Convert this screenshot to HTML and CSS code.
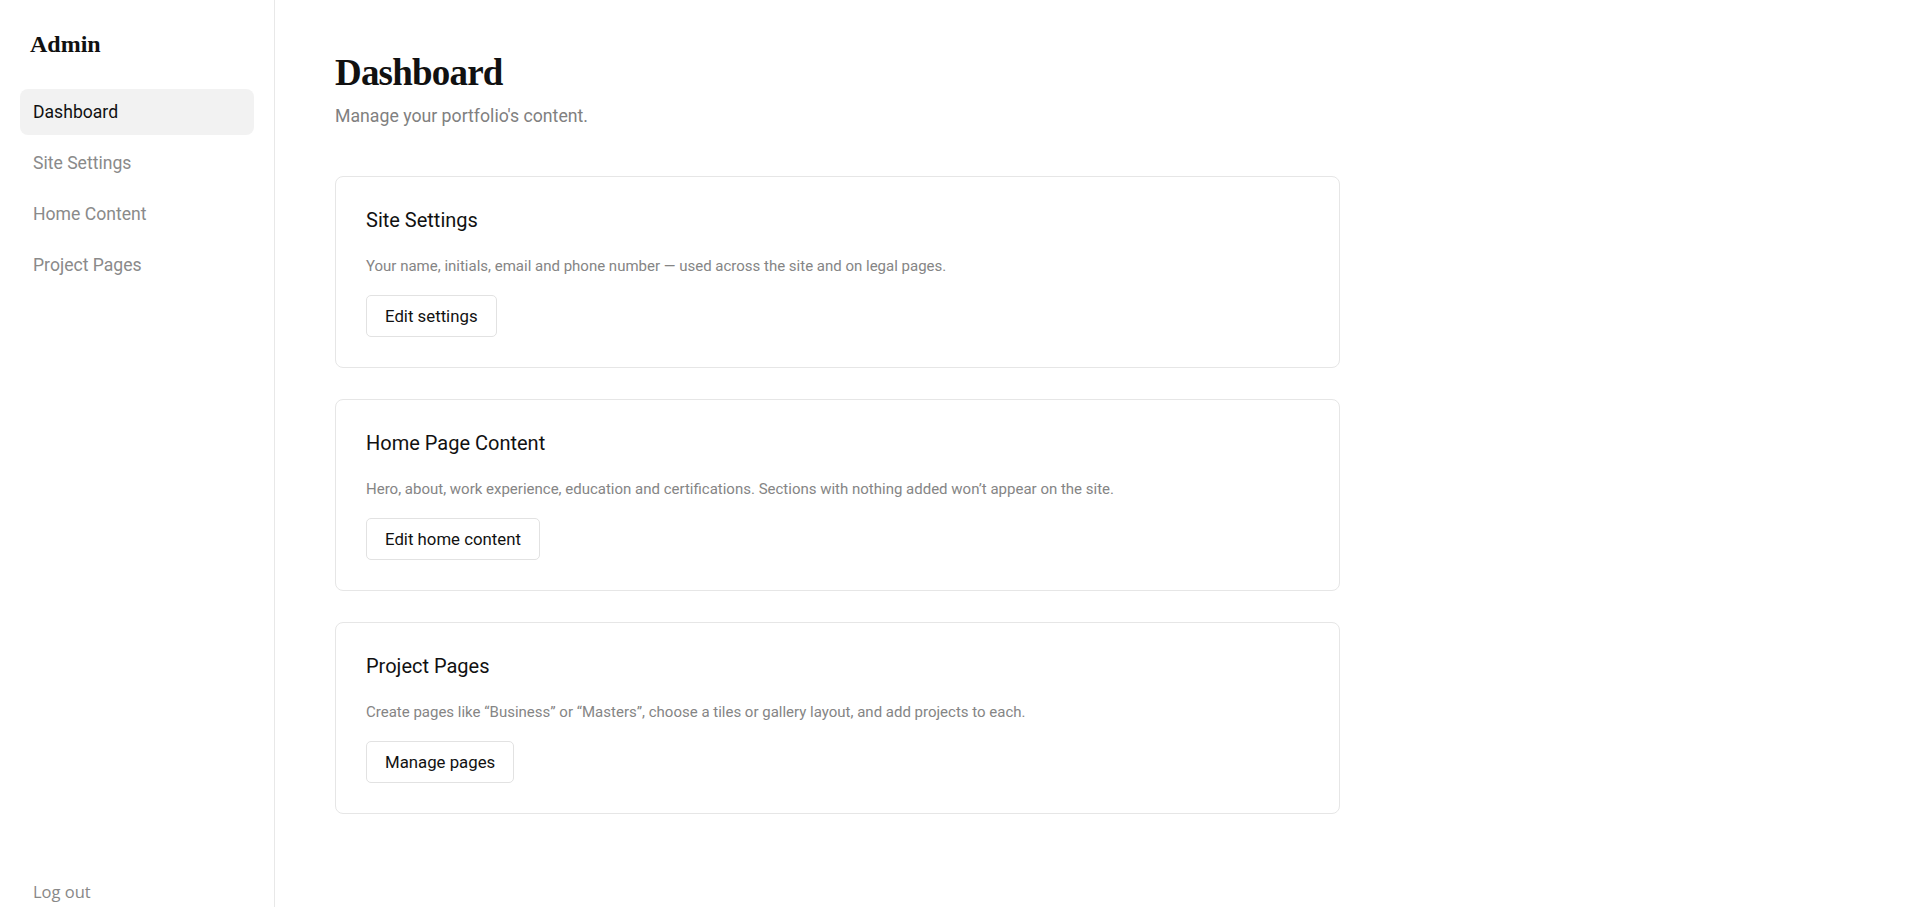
FILE: index.html
```html
<!DOCTYPE html>
<html lang="en">
<head>
<meta charset="utf-8">
<title>Admin — Dashboard</title>
<link rel="stylesheet" href="styles.css">
</head>
<body>
<div class="layout">
  <aside class="sidebar">
    <div class="brand">Admin</div>
    <nav class="nav">
      <a class="nav-item active" href="#">Dashboard</a>
      <a class="nav-item" href="#">Site Settings</a>
      <a class="nav-item" href="#">Home Content</a>
      <a class="nav-item" href="#">Project Pages</a>
    </nav>
    <button class="logout" type="button">Log out</button>
  </aside>
  <main class="main">
    <div class="content">
      <h1 class="title">Dashboard</h1>
      <p class="subtitle">Manage your portfolio's content.</p>
      <section class="card">
        <h2 class="card-title">Site Settings</h2>
        <p class="card-desc">Your name, initials, email and phone number — used across the site and on legal pages.</p>
        <a class="btn" href="#">Edit settings</a>
      </section>
      <section class="card">
        <h2 class="card-title">Home Page Content</h2>
        <p class="card-desc">Hero, about, work experience, education and certifications. Sections with nothing added won’t appear on the site.</p>
        <a class="btn" href="#">Edit home content</a>
      </section>
      <section class="card">
        <h2 class="card-title">Project Pages</h2>
        <p class="card-desc">Create pages like “Business” or “Masters”, choose a tiles or gallery layout, and add projects to each.</p>
        <a class="btn" href="#">Manage pages</a>
      </section>
    </div>
  </main>
</div>
</body>
</html>
```
FILE: styles.css
```css
html {
  background: #ffffff;
}
body {
  margin: 0;
  background: #ffffff;
  color: #111111;
  font-family: "Roboto", "Liberation Sans", sans-serif;
}
.layout {
  display: flex;
  align-items: flex-start;
}
.sidebar {
  position: sticky;
  top: 0;
  box-sizing: border-box;
  width: 275px;
  flex: 0 0 275px;
  height: 100vh;
  padding: 20px 20px 3px;
  border-right: 1px solid #e8e8e8;
  display: flex;
  flex-direction: column;
  background: #ffffff;
}
.brand {
  margin: 10px 0 0 10px;
  font-family: "Liberation Serif", serif;
  font-weight: 700;
  font-size: 24px;
  line-height: 29px;
  color: #111111;
}
.nav {
  margin-top: 30px;
  display: flex;
  flex-direction: column;
  gap: 5px;
}
.nav-item {
  display: block;
  height: 46px;
  line-height: 46px;
  padding: 0 13px;
  border-radius: 8px;
  font-size: 17.6px;
  color: #8a8a8a;
  text-decoration: none;
}
.nav-item.active {
  background: #f2f2f2;
  color: #111111;
}
.logout {
  margin-top: auto;
  align-self: flex-start;
  padding: 0 13px;
  border: 0;
  background: transparent;
  font-family: "Open Sans", sans-serif;
  font-size: 16.5px;
  line-height: 24px;
  color: #888888;
  cursor: pointer;
}
.main {
  flex: 1;
  padding: 51px 60px 40px;
}
.content {
  max-width: 1005px;
}
.title {
  margin: 0;
  font-family: "Liberation Serif", serif;
  font-weight: 700;
  font-size: 37px;
  line-height: 44px;
  letter-spacing: -0.8px;
  color: #111111;
}
.subtitle {
  margin: 9px 0 48px;
  font-size: 17.7px;
  line-height: 24px;
  color: #808080;
}
.card {
  border: 1px solid #e6e6e6;
  border-radius: 8px;
  padding: 30px 30px 30px;
  margin-bottom: 31px;
  background: #ffffff;
}
.card:last-child {
  margin-bottom: 0;
}
.card-title {
  margin: 0;
  font-size: 20px;
  font-weight: 400;
  line-height: 27px;
  color: #111111;
}
.card-desc {
  margin: 22px 0 18px;
  font-size: 15px;
  line-height: 21px;
  color: #858585;
}
.btn {
  display: inline-block;
  height: 42px;
  line-height: 40px;
  box-sizing: border-box;
  padding: 0 18px;
  border: 1px solid #e2e2e2;
  border-radius: 5px;
  font-size: 16.8px;
  color: #111111;
  text-decoration: none;
  background: #ffffff;
}
```
